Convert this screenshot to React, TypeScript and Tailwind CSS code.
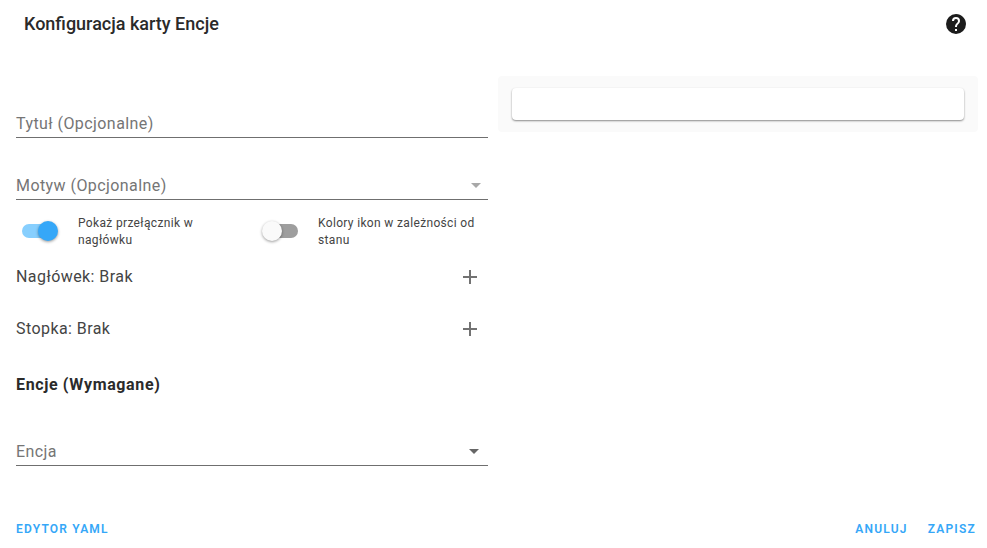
import React from 'react';

const Caret: React.FC<{ className: string }> = ({ className }) => (
  <svg viewBox="0 0 24 24" className={`h-6 w-6 ${className}`} fill="currentColor">
    <path d="M7 10l5 5 5-5z" />
  </svg>
);

const Plus: React.FC = () => (
  <svg viewBox="0 0 24 24" className="h-6 w-6 text-[#727272]" fill="currentColor">
    <path d="M19 13h-6v6h-2v-6H5v-2h6V5h2v6h6v2z" />
  </svg>
);

const Field: React.FC<{ label: string; className: string; caret?: string }> = ({ label, className, caret }) => (
  <div className={`flex h-[30px] items-center justify-between border-b border-[#6f6f6f] ${className}`}>
    <span className="pt-[2px] text-[16px] leading-6 tracking-[0.43px] text-[#757575]">{label}</span>
    {caret && <Caret className={caret} />}
  </div>
);

const Toggle: React.FC<{ on: boolean; label: string; className: string }> = ({ on, label, className }) => (
  <div className={`flex items-center ${className}`}>
    <div className="relative ml-[6px] h-[14px] w-[36px] shrink-0">
      <div className={`h-full w-[32px] rounded-full ${on ? 'bg-[#87cffe]' : 'ml-[4px] bg-[#9e9e9e]'}`} />
      <div
        className={`absolute top-[-3px] h-5 w-5 rounded-full shadow-[0_1px_3px_rgba(0,0,0,0.4)] ${
          on ? 'right-[0px] bg-[#35a7f8]' : 'left-[0px] bg-[#fafafa]'
        }`}
      />
    </div>
    <span className="ml-[20px] pt-[3px] text-[12px] leading-[17px] tracking-[0.34px] text-[#444444]">{label}</span>
  </div>
);

const Row: React.FC<{ label: string; className: string }> = ({ label, className }) => (
  <div className={`flex h-6 items-center justify-between pr-[6px] ${className}`}>
    <span className="text-[16px] tracking-[0.43px] text-[#444444]">{label}</span>
    <Plus />
  </div>
);

const App: React.FC = () => {
  return (
    <div className="flex h-[548px] w-[987px] flex-col overflow-hidden bg-white font-['Roboto',sans-serif]">
      <div className="flex h-[48px] items-center justify-between pl-[24px] pr-[19px]">
        <h1 className="pb-[2px] text-[18px] font-medium text-[#2a2a2a]">Konfiguracja karty Encje</h1>
        <svg viewBox="0 0 24 24" className="h-6 w-6 text-[#1c1c1c]" fill="currentColor">
          <path d="M15.07 11.25l-.9.92C13.45 12.89 13 13.5 13 15h-2v-.5c0-1.11.45-2.11 1.17-2.83l1.24-1.26c.37-.36.59-.86.59-1.41a2 2 0 0 0-2-2 2 2 0 0 0-2 2H8a4 4 0 0 1 4-4 4 4 0 0 1 4 4c0 .88-.36 1.67-.93 2.25M13 19h-2v-2h2m-1-15A10 10 0 0 0 2 12a10 10 0 0 0 10 10 10 10 0 0 0 10-10c0-5.53-4.5-10-10-10z" />
        </svg>
      </div>

      <div className="flex flex-1 pl-4 pr-[9px]">
        <div className="w-[472px]">
          <Field label="Tytuł (Opcjonalne)" className="mt-[60px]" />
          <Field label="Motyw (Opcjonalne)" className="mt-[32px]" caret="text-[#a8a8a8]" />
          <div className="mt-[12px] flex">
            <Toggle on label="Pokaż przełącznik w nagłówku" className="w-[240px] pr-[40px]" />
            <Toggle on={false} label="Kolory ikon w zależności od stanu" className="w-[232px]" />
          </div>
          <Row label="Nagłówek: Brak" className="mt-[16px]" />
          <Row label="Stopka: Brak" className="mt-[28px]" />
          <h2 className="mt-[32px] text-[16px] font-bold leading-6 tracking-[0.63px] text-[#2b2b2b]">Encje (Wymagane)</h2>
          <Field label="Encja" className="mt-[39px]" caret="mr-[2px] text-[#666666]" />
        </div>
        <div className="ml-[10px] mt-[28px] h-[56px] w-[480px] rounded-[4px] bg-[#fafafa] px-[14px] py-[12px]">
          <div className="h-[32px] rounded-[4px] bg-white shadow-[0_1px_2px_rgba(0,0,0,0.45)]" />
        </div>
      </div>

      <div className="flex h-[38px] items-start justify-between pl-4 pr-[11px] pt-[10px] text-[12px] font-semibold tracking-[1.2px] text-[#35a7f8]">
        <span>EDYTOR YAML</span>
        <div className="flex gap-[20px]">
          <span>ANULUJ</span>
          <span>ZAPISZ</span>
        </div>
      </div>
    </div>
  );
};

export default App;
